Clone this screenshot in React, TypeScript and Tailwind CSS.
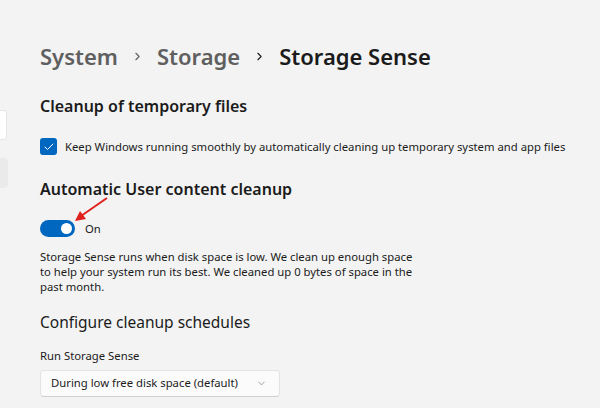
import { ChevronDown, ChevronRight, Check } from "lucide-react";

const font = { fontFamily: '"Noto Sans", "Open Sans", sans-serif' };

export default function App() {
  return (
    <div
      className="relative w-[600px] h-[408px] overflow-hidden bg-[#f3f3f3] text-[#1b1b1b]"
      style={font}
    >
      {/* 사이드바 끝부분 */}
      <div className="absolute left-0 top-[110px] w-[7px] h-[30px] rounded-r bg-white border border-l-0 border-[#e5e5e5]" />
      <div className="absolute left-0 top-[158px] w-[8px] h-[30px] rounded-r bg-[#eaeaea]" />

      <div className="pl-[40px] pt-[38px] flex flex-col">
        <div className="flex items-center gap-[13px] text-[22px] font-semibold leading-[36px]">
          <span className="text-[#5f5f5f]">System</span>
          <ChevronRight size={13} strokeWidth={2} className="text-[#5f5f5f]" />
          <span className="text-[#5f5f5f]">Storage</span>
          <ChevronRight size={13} strokeWidth={2} className="text-[#1b1b1b]" />
          <span>Storage Sense</span>
        </div>

        <h2 className="mt-[21px] text-[16px] font-semibold leading-[22px]">
          Cleanup of temporary files
        </h2>

        <div className="mt-[21px] flex items-center gap-[8px]">
          <div className="w-[17px] h-[17px] rounded-[3px] bg-[#0067c0] flex items-center justify-center">
            <Check size={12} strokeWidth={2} className="text-white" />
          </div>
          <span className="text-[11.3px] leading-[16px]">
            Keep Windows running smoothly by automatically cleaning up temporary system and app files
          </span>
        </div>

        <h2 className="mt-[23px] text-[16px] font-semibold leading-[22px]">
          Automatic User content cleanup
        </h2>

        <div className="mt-[20px] flex items-center gap-[10px]">
          <div className="w-[35px] h-[17px] rounded-full bg-[#0067c0] flex items-center justify-end pr-[3px]">
            <div className="w-[11px] h-[11px] rounded-full bg-white" />
          </div>
          <span className="text-[11.3px] leading-[16px]">On</span>
        </div>

        <p className="mt-[12px] w-[378px] text-[11.3px] leading-[15px]">
          Storage Sense runs when disk space is low. We clean up enough space to help your system run its best. We cleaned up 0 bytes of space in the past month.
        </p>

        <h3 className="mt-[17px] text-[15.5px] leading-[22px]">Configure cleanup schedules</h3>

        <span className="mt-[15px] text-[11.3px] leading-[16px]">Run Storage Sense</span>

        <div className="mt-[6px] w-[240px] h-[27px] rounded-[4px] bg-[#fbfbfb] border border-[#e3e3e3] border-b-[#d0d0d0] flex items-center justify-between pl-[10px] pr-[12px]">
          <span className="text-[11.3px]">During low free disk space (default)</span>
          <ChevronDown size={11} strokeWidth={1.5} className="text-[#777]" />
        </div>
      </div>

      {/* 빨간 화살표 */}
      <svg className="absolute left-0 top-0" width="600" height="408">
        <line x1="107" y1="198" x2="81" y2="216" stroke="#e0201b" strokeWidth="2" />
        <polygon points="75,221 80,211 86,219" fill="#e0201b" />
      </svg>
    </div>
  );
}
